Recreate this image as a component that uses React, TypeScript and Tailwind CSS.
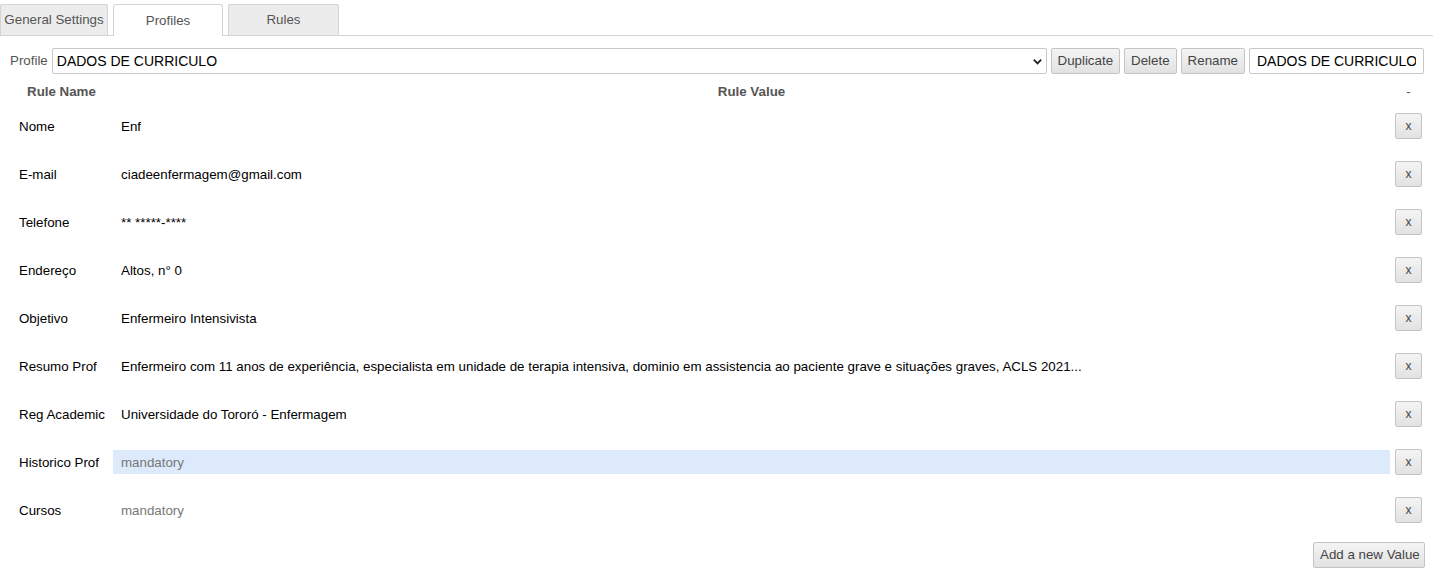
import { useState } from 'react';

interface RuleRow {
  name: string;
  value: string;
}

const rows: RuleRow[] = [
  { name: 'Nome', value: 'Enf' },
  { name: 'E-mail', value: 'ciadeenfermagem@gmail.com' },
  { name: 'Telefone', value: '** *****-****' },
  { name: 'Endereço', value: 'Altos, n° 0' },
  { name: 'Objetivo', value: 'Enfermeiro Intensivista' },
  {
    name: 'Resumo Prof',
    value:
      'Enfermeiro com 11 anos de experiência, especialista em unidade de terapia intensiva, dominio em assistencia ao paciente grave e situações graves, ACLS 2021...',
  },
  { name: 'Reg Academic', value: 'Universidade do Tororó - Enfermagem' },
  { name: 'Historico Prof', value: '' },
  { name: 'Cursos', value: '' },
];

const btn =
  'h-[26px] px-[6px] whitespace-nowrap border border-[#c4c4c4] rounded-[2px] bg-gradient-to-b from-[#f4f4f4] to-[#e2e2e2] text-[13.33px] text-[#444] leading-none';

export default function App() {
  const [tab] = useState('Profiles');

  return (
    <div className="w-[1433px] h-[568px] bg-white overflow-hidden font-['Liberation_Sans',Arial,sans-serif] text-[13.33px] text-[#222]">
      {/* Tabs */}
      <div className="flex items-end gap-[5px] h-[36px] border-b border-[#d4d4d4]">
        {['General Settings', 'Profiles', 'Rules'].map((t) => (
          <div
            key={t}
            className={
              t === tab
                ? 'h-[32px] w-[110px] flex items-center justify-center bg-white border border-b-0 border-[#d4d4d4] rounded-t-[3px] text-[#555] -mb-px'
                : t === 'General Settings'
                  ? 'h-[31px] w-[108px] flex items-center justify-center bg-[#ececec] border border-b-0 border-[#d4d4d4] rounded-t-[2px] text-[#555] whitespace-nowrap'
                  : 'h-[31px] w-[111px] flex items-center justify-center bg-[#ececec] border border-b-0 border-[#d4d4d4] rounded-t-[2px] text-[#555]'
            }
          >
            {t}
          </div>
        ))}
      </div>

      {/* Profile selector */}
      <div className="flex items-center gap-[4px] mt-[12px] pl-[10px] pr-[9px]">
        <span className="text-[#555]">Profile</span>
        <div className="relative flex-1">
          <select className="w-full h-[26px] border border-[#c8c8c8] rounded-[2px] pl-[4px] pr-[24px] text-[14px] text-black appearance-none bg-white">
            <option>DADOS DE CURRICULO</option>
          </select>
          <svg
            className="absolute right-[4px] top-[8px] pointer-events-none"
            width="11"
            height="11"
            viewBox="0 0 12 12"
          >
            <path d="M2 4 L6 8 L10 4" fill="none" stroke="#222" strokeWidth="2" />
          </svg>
        </div>
        <button className={btn}>Duplicate</button>
        <button className={btn}>Delete</button>
        <button className={btn}>Rename</button>
        <input
          readOnly
          value="DADOS DE CURRICULO"
          className="w-[175px] h-[26px] border border-[#c8c8c8] rounded-[2px] px-[7px] text-[14px] text-black"
        />
      </div>

      {/* Header */}
      <div className="flex items-center h-[20px] mt-[8px] font-bold text-[#555]">
        <div className="w-[113px] pl-[27px]">Rule Name</div>
        <div className="flex-1 text-center">Rule Value</div>
        <div className="w-[43px] pr-[11px] text-right font-normal">
          <span className="inline-block w-[27px] text-center">-</span>
        </div>
      </div>

      {/* Rows */}
      {rows.map((r, i) => (
        <div key={r.name} className="flex items-center h-[48px] pr-[11px]">
          <div className="w-[113px] pl-[19px] text-black pt-px">{r.name}</div>
          <input
            readOnly
            value={r.value}
            placeholder="mandatory"
            className={
              'flex-1 h-[24px] px-[8px] text-[13.33px] text-black placeholder:text-[#777] outline-none ' +
              (i === 7 ? 'bg-[#dceafb]' : 'bg-transparent')
            }
          />
          <button className="ml-[5px] w-[27px] h-[26px] border border-[#c4c4c4] rounded-[2px] bg-gradient-to-b from-[#f4f4f4] to-[#e2e2e2] text-[12px] text-[#444] leading-none">
            x
          </button>
        </div>
      ))}

      <div className="flex justify-end pr-[8px] mt-[8px]">
        <button className={btn + ' w-[112px]'}>Add a new Value</button>
      </div>
    </div>
  );
}
